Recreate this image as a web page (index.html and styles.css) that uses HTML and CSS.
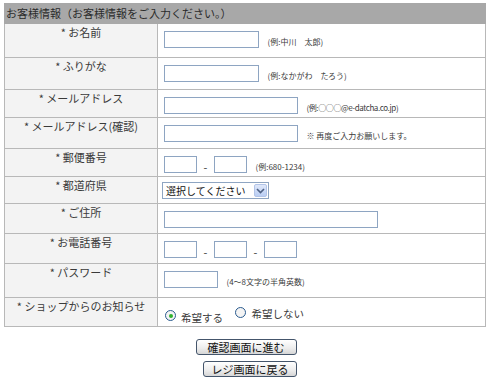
FILE: index.html
```html
<!DOCTYPE html>
<html lang="ja">
<head>
    <meta charset="UTF-8">
    <title>お客様情報</title>
    <link rel="stylesheet" href="styles.css">
</head>
<body>

    <div class="container">
        <!-- Customer info form -->
        <table class="form-table">
            <tr>
                <th colspan="2" class="caption">お客様情報（お客様情報をご入力ください。）</th>
            </tr>
            <tr class="row-tall">
                <td class="label">* お名前</td>
                <td class="field">
                    <input type="text" class="w-name">
                    <span class="note">(例:中川　太郎)</span>
                </td>
            </tr>
            <tr class="row-mid">
                <td class="label">* ふりがな</td>
                <td class="field">
                    <input type="text" class="w-name">
                    <span class="note">(例:なかがわ　たろう)</span>
                </td>
            </tr>
            <tr>
                <td class="label">* メールアドレス</td>
                <td class="field">
                    <input type="text" class="w-mail">
                    <span class="note note-tight">(例:○○○@e-datcha.co.jp)</span>
                </td>
            </tr>
            <tr class="row-31">
                <td class="label">* メールアドレス(確認)</td>
                <td class="field">
                    <input type="text" class="w-mail">
                    <span class="note">※ 再度ご入力お願いします。</span>
                </td>
            </tr>
            <tr>
                <td class="label">* 郵便番号</td>
                <td class="field">
                    <input type="text" class="w-small"><span class="dash">-</span><input type="text" class="w-small">
                    <span class="note">(例:680-1234)</span>
                </td>
            </tr>
            <tr class="row-short">
                <td class="label">* 都道府県</td>
                <td class="field field-select">
                    <div class="select-box">
                        <span>選択してください</span>
                        <span class="select-arrow">
                            <svg width="9" height="6" viewBox="0 0 9 6"><path d="M1 1 L4.5 4.5 L8 1" fill="none" stroke="#4d6185" stroke-width="1.6"/></svg>
                        </span>
                    </div>
                </td>
            </tr>
            <tr class="row-30">
                <td class="label">* ご住所</td>
                <td class="field">
                    <input type="text" class="w-addr">
                </td>
            </tr>
            <tr class="row-30">
                <td class="label">* お電話番号</td>
                <td class="field">
                    <input type="text" class="w-small"><span class="dash">-</span><input type="text" class="w-small"><span class="dash">-</span><input type="text" class="w-small">
                </td>
            </tr>
            <tr class="row-tall">
                <td class="label">* パスワード</td>
                <td class="field">
                    <input type="password" class="w-pass">
                    <span class="note">(4～8文字の半角英数)</span>
                </td>
            </tr>
            <tr>
                <td class="label">* ショップからのお知らせ</td>
                <td class="field field-radio">
                    <label class="radio"><span class="radio-dot checked"></span>希望する</label>
                    <label class="radio"><span class="radio-dot"></span>希望しない</label>
                </td>
            </tr>
        </table>

        <!-- Buttons -->
        <div class="button-container">
            <button type="button" class="btn btn-next">確認画面に進む</button>
            <button type="button" class="btn btn-back">レジ画面に戻る</button>
        </div>
    </div>

</body>
</html>
```

FILE: styles.css
```css
/* Basic page styling */
body {
    margin: 0;
    padding: 0;
    background-color: #fff;
    color: #3a3a3a;
    font-family: "Noto Sans CJK JP", "DejaVu Sans", sans-serif;
    font-size: 11px;
}

.container {
    padding: 3px 4px 0 4px;
}

/* Form table */
.form-table {
    width: 482px;
    border-collapse: collapse;
}

.form-table td {
    border: 1px solid #b8b8b8;
    height: 28px;
    vertical-align: top;
    box-sizing: border-box;
}

.caption {
    background-color: #a8a8a8;
    color: #2b2b2b;
    font-weight: normal;
    text-align: left;
    height: 19px;
    padding: 0 0 0 1px;
    line-height: 19px;
    border: 1px solid #a8a8a8;
}

.row-tall td { height: 34px; }
.row-mid td { height: 32px; }
.row-31 td { height: 31px; }
.row-30 td { height: 30px; }
.row-short td { height: 27px; }

/* Left label column */
.label {
    width: 153px;
    background-color: #f3f3f3;
    text-align: center;
    padding: 1px 4px 0 4px;
    line-height: 14px;
}

/* Right input column */
.field {
    padding: 7px 0 0 6px;
    line-height: 16px;
    white-space: nowrap;
}

.field-select {
    padding-top: 5px;
}

.field-radio {
    padding-top: 8px;
}

input {
    height: 17px;
    box-sizing: border-box;
    border: 1px solid #8ea5c2;
    margin: 0;
    padding: 0 2px;
    vertical-align: bottom;
    background-color: #fff;
}

.w-name { width: 95px; }
.w-mail { width: 134px; }
.w-small { width: 33px; }
.w-addr { width: 214px; }
.w-pass { width: 54px; }

.note {
    font-size: 8px;
    margin-left: 6px;
    vertical-align: bottom;
    line-height: 12px;
}

.note-tight {
    letter-spacing: -0.4px;
}

.dash {
    display: inline-block;
    width: 17px;
    text-align: center;
    vertical-align: bottom;
    line-height: 12px;
}

/* Fake select box */
.select-box {
    display: flex;
    align-items: center;
    justify-content: space-between;
    width: 107px;
    height: 17px;
    box-sizing: border-box;
    border: 1px solid #8ea5c2;
    margin-left: -2px;
    padding-left: 3px;
    color: #111;
    font-size: 10px;
    line-height: 15px;
}

.select-arrow {
    display: flex;
    align-items: center;
    justify-content: center;
    width: 13px;
    height: 13px;
    margin-right: 1px;
    background: linear-gradient(#dfe8fa, #b9cdf3);
    border: 1px solid #b2c4e8;
    box-sizing: border-box;
    border-radius: 2px;
}

/* Radios */
.radio {
    display: inline-flex;
    align-items: center;
    margin-right: 9px;
    font-size: 10.5px;
    line-height: 16px;
}

.radio-dot {
    width: 11px;
    height: 11px;
    box-sizing: border-box;
    border: 1px solid #2a5b8f;
    border-radius: 50%;
    background-color: #f4f4f4;
    margin: 0 5px 0 1px;
    position: relative;
    top: -2px;
    display: flex;
    align-items: center;
    justify-content: center;
}

.radio-dot.checked::after {
    content: "";
    width: 4px;
    height: 4px;
    border-radius: 50%;
    background-color: #2fb12f;
}

/* Button styling */
.button-container {
    display: flex;
    flex-direction: column;
    align-items: center;
    gap: 6px;
    margin-top: 12px;
    padding-left: 2px;
}

.btn {
    height: 16px;
    padding: 0;
    border: 1px solid #44556b;
    border-radius: 3px;
    background: linear-gradient(#ffffff, #ececec 60%, #d6d6d6);
    color: #111;
    font-family: "Noto Sans CJK JP", "DejaVu Sans", sans-serif;
    font-size: 11px;
    line-height: 14px;
    cursor: pointer;
}

.btn-next {
    width: 101px;
}

.btn-back {
    width: 94px;
    margin-left: 8px;
}
```
